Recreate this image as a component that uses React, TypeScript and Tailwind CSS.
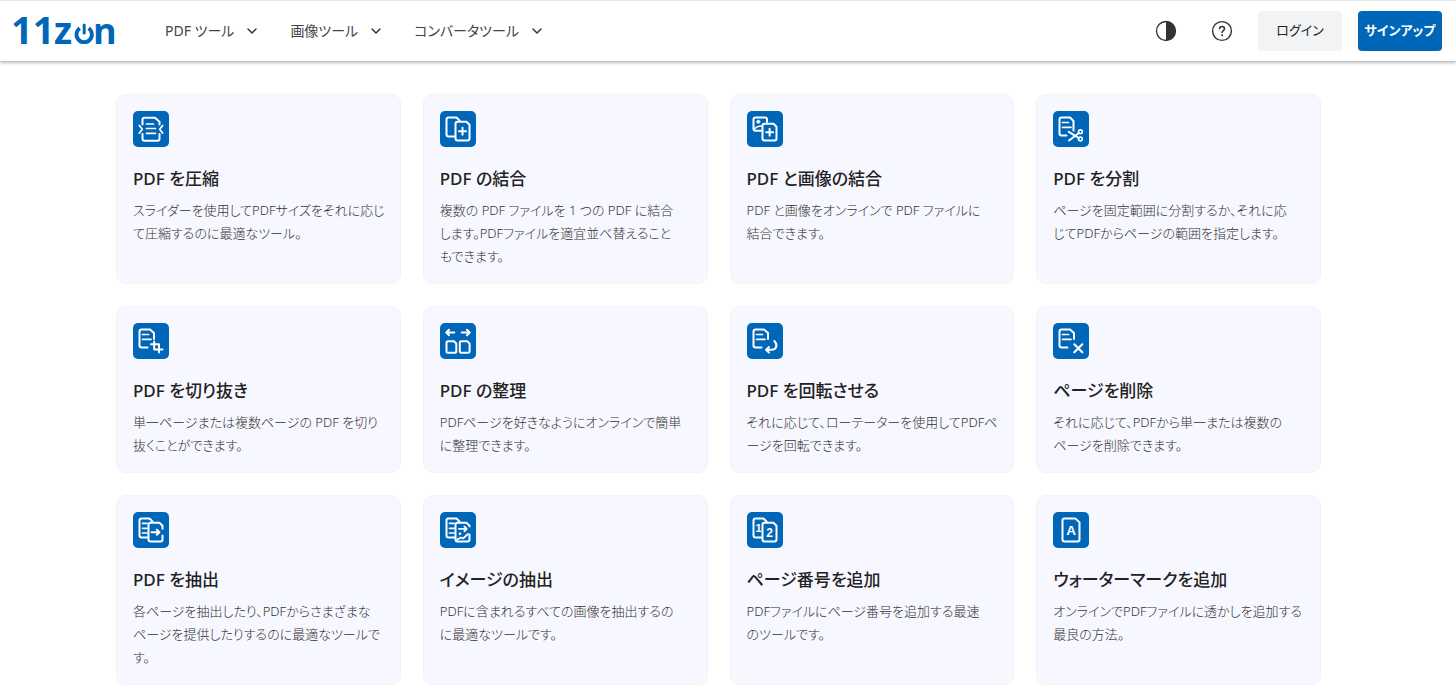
import type { ReactNode } from "react";
import { ChevronDown } from "lucide-react";

const menus = ["PDF ツール", "画像ツール", "コンバータツール"];

// left-hand page with two text lines, shared by the "page + action" icons
const PageBase = () => (
  <>
    <path d="M14.5 24.5H8.5a2 2 0 0 1-2-2V8.5a2 2 0 0 1 2-2h8.5l4 3.5v6" />
    <path d="M9.5 11.5h6M9.5 16.3h8.5" strokeWidth="1.7" />
  </>
);

const PageBack = () => <path d="M15 25.5H8.5a2 2 0 0 1-2-2v-15a2 2 0 0 1 2-2H16.5l3 3" />;

const PageFront = () => (
  <path d="M17.5 10.7h9l3 3V27.5a2 2 0 0 1-2 2h-10a2 2 0 0 1-2-2v-14.8a2 2 0 0 1 2-2z" />
);

const CompressIcon = () => (
  <>
    <path d="M9.5 13.5V8.7a2 2 0 0 1 2-2h10.5l4.5 4v2.8M9.5 23v4.8a2 2 0 0 0 2 2h13a2 2 0 0 0 2-2V23" />
    <path d="M6.3 14.5l3 3.8-3 3.8M29.7 14.5l-3 3.8 3 3.8" strokeWidth="1.7" />
    <path d="M13.5 13h7M13.5 17.5h9M13.5 22.3h9" strokeWidth="1.7" />
  </>
);

const MergeIcon = () => (
  <>
    <PageBack />
    <PageFront />
    <path d="M22.5 16.8v7M19 20.3h7" />
  </>
);

const MergeImageIcon = () => (
  <>
    <path d="M14 19.8H8.5a2 2 0 0 1-2-2V8.5a2 2 0 0 1 2-2h9.5a2 2 0 0 1 2 2V11" />
    <path d="M7 18.5c2-2.5 4-3.7 8-3.5" strokeWidth="1.7" />
    <circle cx="11.3" cy="10.7" r="1.7" fill="white" strokeWidth="0.5" />
    <path d="M17.5 12.8h9l3 3V27.5a2 2 0 0 1-2 2h-10a2 2 0 0 1-2-2v-12.7a2 2 0 0 1 2-2z" />
    <path d="M22.6 17.8v7M19.1 21.3h7" />
  </>
);

const SplitIcon = () => (
  <>
    <path d="M13.5 24.5H8.5a2 2 0 0 1-2-2V8.5a2 2 0 0 1 2-2h8.5l3.5 3.5v9.5" />
    <path d="M9.5 11.5h6M9.5 16.3h8.5" strokeWidth="1.7" />
    <path d="M15.8 20.8l10 6.2M16 29.5l10-7.5" />
    <circle cx="27.4" cy="28" r="1.9" strokeWidth="1.6" />
    <circle cx="27.4" cy="20.8" r="1.9" strokeWidth="1.6" />
  </>
);

const CropIcon = () => (
  <>
    <PageBase />
    <path d="M18 21.3h8v8.2M21.2 18.5v8H29.5" />
  </>
);

const OrganizeIcon = () => (
  <>
    <path d="M14.3 9.5H6.5M9 6.8L6.3 9.5L9 12.2M21.7 9.5h7.8M27 6.8l2.7 2.7L27 12.2" />
    <path d="M8 18.3h6l2.3 2.3V28.3a1.5 1.5 0 0 1-1.5 1.5H8a1.5 1.5 0 0 1-1.5-1.5v-8.5a1.5 1.5 0 0 1 1.5-1.5z" />
    <path d="M21.3 18.3h6l2.3 2.3V28.3a1.5 1.5 0 0 1-1.5 1.5h-6.8a1.5 1.5 0 0 1-1.5-1.5v-8.5a1.5 1.5 0 0 1 1.5-1.5z" />
  </>
);

const RotateIcon = () => (
  <>
    <PageBase />
    <path d="M27.3 18c4 4 2 8.8-2.8 8.8H19.3M22 24l-3 2.8 3 2.8" />
  </>
);

const DeleteIcon = () => (
  <>
    <PageBase />
    <path d="M21.3 21.3l8 8M29.3 21.3l-8 8" strokeWidth="2.2" />
  </>
);

const ExtractBase = () => (
  <>
    <PageBack />
    <path d="M9.5 11.3h4.5M9.5 16.3h4.5M9.5 21h4.5" strokeWidth="1.7" />
  </>
);

const ExtractIcon = () => (
  <>
    <ExtractBase />
    <path d="M29.5 16.8V13.7l-3-3h-9a2 2 0 0 0-2 2V27.5a2 2 0 0 0 2 2h10a2 2 0 0 0 2-2v-4" />
    <path d="M18.5 20.2h7.5M23.8 17.6l2.6 2.6-2.6 2.6" />
  </>
);

const ExtractImageIcon = () => (
  <>
    <ExtractBase />
    <path d="M29.5 14.5V13.7l-3-3h-9a2 2 0 0 0-2 2V27.5a2 2 0 0 0 2 2h10a2 2 0 0 0 2-2v-5" />
    <path d="M19 16.8h7.5M24.3 14.3l2.5 2.5-2.5 2.5M16.5 28l4.5-2.5 2 1 5-4.5" strokeWidth="1.7" />
    <circle cx="20" cy="21.8" r="1.3" fill="white" stroke="none" />
  </>
);

const NumberIcon = () => (
  <>
    <PageBack />
    <PageFront />
    <text x="8.5" y="19.5" fontSize="11" fontWeight="700" fill="white" stroke="none">1</text>
    <text x="19.2" y="24.6" fontSize="12" fontWeight="700" fill="white" stroke="none">2</text>
  </>
);

const WatermarkIcon = () => (
  <>
    <path d="M11.5 6.6h11l4 3.8V27.6a2 2 0 0 1-2 2h-13a2 2 0 0 1-2-2v-19a2 2 0 0 1 2-2z" />
    <text x="13.2" y="23" fontSize="13.5" fontWeight="700" fill="white" stroke="none">A</text>
  </>
);

type Tool = { title: string; lines: string[]; icon: ReactNode };

const tools: Tool[] = [
  { title: "PDF を圧縮", lines: ["スライダーを使用してPDFサイズをそれに応じ", "て圧縮するのに最適なツール。"], icon: <CompressIcon /> },
  { title: "PDF の結合", lines: ["複数の PDF ファイルを 1 つの PDF に結合", "します。PDFファイルを適宜並べ替えること", "もできます。"], icon: <MergeIcon /> },
  { title: "PDF と画像の結合", lines: ["PDF と画像をオンラインで PDF ファイルに", "結合できます。"], icon: <MergeImageIcon /> },
  { title: "PDF を分割", lines: ["ページを固定範囲に分割するか、それに応", "じてPDFからページの範囲を指定します。"], icon: <SplitIcon /> },
  { title: "PDF を切り抜き", lines: ["単一ページまたは複数ページの PDF を切り", "抜くことができます。"], icon: <CropIcon /> },
  { title: "PDF の整理", lines: ["PDFページを好きなようにオンラインで簡単", "に整理できます。"], icon: <OrganizeIcon /> },
  { title: "PDF を回転させる", lines: ["それに応じて、ローテーターを使用してPDFペ", "ージを回転できます。"], icon: <RotateIcon /> },
  { title: "ページを削除", lines: ["それに応じて、PDFから単一または複数の", "ページを削除できます。"], icon: <DeleteIcon /> },
  { title: "PDF を抽出", lines: ["各ページを抽出したり、PDFからさまざまな", "ページを提供したりするのに最適なツールで", "す。"], icon: <ExtractIcon /> },
  { title: "イメージの抽出", lines: ["PDFに含まれるすべての画像を抽出するの", "に最適なツールです。"], icon: <ExtractImageIcon /> },
  { title: "ページ番号を追加", lines: ["PDFファイルにページ番号を追加する最速", "のツールです。"], icon: <NumberIcon /> },
  { title: "ウォーターマークを追加", lines: ["オンラインでPDFファイルに透かしを追加する", "最良の方法。"], icon: <WatermarkIcon /> },
];

const Logo = () => (
  <svg width="110" height="56" viewBox="0 0 110 56" fill="#0067b8" className="font-['Open_Sans',sans-serif]" role="img" aria-label="11zon">
    <text x="-1" y="41" fontSize="38" fontWeight="700">11</text>
    <text x="42" y="41" fontSize="37" fontWeight="700">z</text>
    <path d="M67.8 25.2a7.7 7.7 0 1 0 8.8 0" fill="none" stroke="#0067b8" strokeWidth="3.8" />
    <path d="M72.2 22v8" stroke="#0067b8" strokeWidth="3" strokeLinecap="round" />
    <text x="81" y="41" fontSize="36" fontWeight="700">n</text>
  </svg>
);

const Header = () => (
  <header className="flex h-[61px] items-center border-t border-[#e8e8e8] bg-white px-3 shadow-[0_1px_4px_rgba(0,0,0,0.4)]">
    <a href="#" className="shrink-0">
      <Logo />
    </a>
    <nav className="ml-[43px] flex items-center gap-[30px]">
      {menus.map((name) => (
        <button key={name} type="button" className="flex items-center gap-2.5 whitespace-nowrap text-sm text-[#444]">
          {name}
          <ChevronDown size={16} strokeWidth={2.2} className="text-[#333]" />
        </button>
      ))}
    </nav>
    <div className="ml-auto flex items-center gap-4 pr-0.5">
      <button type="button" aria-label="テーマ" className="flex size-10 items-center justify-center">
        <svg width="22" height="22" viewBox="0 0 22 22">
          <circle cx="11" cy="11" r="9.5" fill="none" stroke="#333" strokeWidth="1.3" />
          <path d="M11 1.5a9.5 9.5 0 0 1 0 19z" fill="#333" />
        </svg>
      </button>
      <button type="button" aria-label="ヘルプ" className="flex size-10 items-center justify-center">
        <svg width="22" height="22" viewBox="0 0 22 22" fill="none" stroke="#333" strokeLinecap="round">
          <circle cx="11" cy="11" r="9.4" strokeWidth="1.4" />
          <path d="M8.6 8.8c0-3 4.9-3 4.9 0 0 1.8-2.4 1.9-2.4 3.8" strokeWidth="1.5" />
          <circle cx="11.1" cy="15.2" r="1" fill="#333" stroke="none" />
        </svg>
      </button>
      <button type="button" className="h-10 w-[84px] rounded bg-[#f1f3f5] text-[13px] text-[#222]">ログイン</button>
      <button type="button" className="h-10 w-[84px] whitespace-nowrap rounded bg-[#0067b8] text-[13px] font-bold text-white">サインアップ</button>
    </div>
  </header>
);

const ToolCard = ({ title, lines, icon }: Tool) => (
  <a href="#" className="block rounded-[10px] border border-[#f2f2f9] bg-[#f7f7ff] px-4 pt-4 pb-[15px]">
    <svg width="36" height="36" viewBox="0 0 36 36" fill="none" stroke="white" strokeWidth="2" strokeLinecap="round" strokeLinejoin="round" className="rounded-[5px] bg-[#0067b8] font-['Liberation_Sans',sans-serif]" aria-hidden="true">
      {icon}
    </svg>
    <h2 className="mt-[17px] text-[17px] leading-[30px] font-medium text-[#222]">{title}</h2>
    <p className="mt-[5px] whitespace-nowrap text-[13px] leading-[23px] font-light text-[#333]">
      {lines.map((line) => (
        <span key={line} className="block">{line}</span>
      ))}
    </p>
  </a>
);

export default function App() {
  return (
    <div lang="ja" className="min-h-screen bg-white font-['Noto_Sans','Noto_Sans_CJK_JP',sans-serif] [font-feature-settings:'palt']">
      <Header />
      <main className="pt-[33px] pr-[19px] pb-2">
        <div className="mx-auto grid max-w-[1205px] grid-cols-4 gap-[22px]">
          {tools.map((tool) => (
            <ToolCard key={tool.title} {...tool} />
          ))}
        </div>
      </main>
    </div>
  );
}
